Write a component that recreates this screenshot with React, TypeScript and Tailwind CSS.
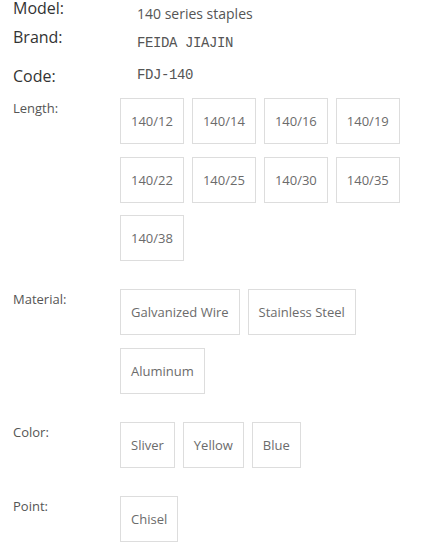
import React from "react";

const specs = [
  {
    label: "Length:",
    options: ["140/12", "140/14", "140/16", "140/19", "140/22", "140/25", "140/30", "140/35", "140/38"],
  },
  { label: "Material:", options: ["Galvanized Wire", "Stainless Steel", "Aluminum"] },
  { label: "Color:", options: ["Sliver", "Yellow", "Blue"] },
  { label: "Point:", options: ["Chisel"] },
];

const OptionBox = ({ text }: { text: string }) => (
  <div className="flex h-[46px] items-center border border-[#dddddd] bg-white px-[10px] text-[13px] leading-[18px] text-[#6b6b6b]">
    {text}
  </div>
);

export default function App() {
  return (
    <div
      className="w-[431px] bg-white px-[13px] text-[#444]"
      style={{ fontFamily: '"Open Sans", "Noto Sans", sans-serif' }}
    >
      {/* basic info */}
      <div className="flex h-[28px] items-start">
        <div className="w-[124px] text-[16px] leading-[16px] text-[#333]">Model:</div>
        <div className="mt-[5px] text-[14px] leading-[18px] text-[#555]">140 series staples</div>
      </div>
      <div className="flex h-[39px] items-start">
        <div className="w-[124px] text-[16px] leading-[18px] text-[#333]">Brand:</div>
        <div
          className="mt-[6px] text-[14px] leading-[18px] tracking-[-0.4px] text-[#555]"
          style={{ fontFamily: '"Liberation Mono", monospace' }}
        >
          FEIDA JIAJIN
        </div>
      </div>
      <div className="flex h-[31px] items-start">
        <div className="w-[124px] text-[16px] leading-[18px] text-[#333]">Code:</div>
        <div
          className="mt-[-1px] text-[14px] leading-[18px] tracking-[-0.4px] text-[#555]"
          style={{ fontFamily: '"Liberation Mono", monospace' }}
        >
          FDJ-140
        </div>
      </div>

      {/* selectable specs */}
      <div className="flex flex-col gap-[28px] pb-[2px]">
        {specs.map((s) => (
          <div key={s.label} className="flex items-start">
            <div className="mt-[1px] w-[107px] text-[13px] leading-[18px] text-[#555]">{s.label}</div>
            <div className="flex w-[290px] flex-wrap gap-x-2 gap-y-[12.5px]">
              {s.options.map((o) => (
                <OptionBox key={o} text={o} />
              ))}
            </div>
          </div>
        ))}
      </div>
    </div>
  );
}
